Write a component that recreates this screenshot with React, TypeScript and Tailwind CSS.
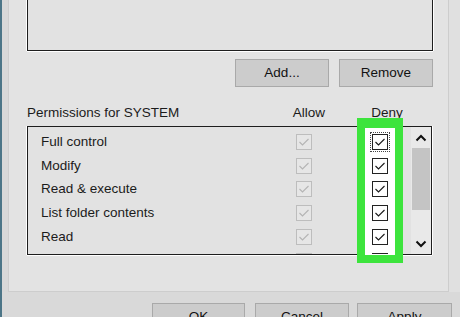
import React from "react";

const rows = ["Full control", "Modify", "Read & execute", "List folder contents", "Read", ""];

function Check({ disabled, focus }: { disabled?: boolean; focus?: boolean }) {
  return (
    <div
      className={
        disabled
          ? "w-[16px] h-[16px] shrink-0 border border-[#bdbdbd] bg-[#e6e6e6] flex items-center justify-center"
          : focus
          ? "relative z-20 w-[16px] h-[16px] shrink-0 border border-[#222] bg-white outline outline-1 outline-dotted outline-offset-[1px] outline-[#444] flex items-center justify-center"
          : "relative z-20 w-[16px] h-[16px] shrink-0 border border-[#222] bg-white flex items-center justify-center"
      }
    >
      <svg width="14" height="14" viewBox="0 0 14 14">
        <path
          d="M2.5 7 L5.5 10 L11.5 4"
          fill="none"
          stroke={disabled ? "#b4b4b4" : "#1a1a1a"}
          strokeWidth="1.1"
        />
      </svg>
    </div>
  );
}

function Btn({ label, w, extra }: { label: string; w: string; extra?: string }) {
  return (
    <div
      className={`${w} h-[28px] shrink-0 bg-[#cccccc] border border-[#a9a9a9] flex items-center justify-center text-[#111] ${extra ?? ""}`}
    >
      {label}
    </div>
  );
}

export default function App() {
  return (
    <div className="relative w-[460px] h-[317px] overflow-hidden flex bg-[#dadada] font-['Liberation_Sans',Arial,sans-serif] text-[13.5px] text-[#1b1b1b]">
      <div className="w-[2px] shrink-0 bg-[#4c7587]" />
      <div className="flex flex-col flex-1">
        <div className="flex h-[292px]">
          <div className="w-[6px] shrink-0 bg-[#d8d8d8]" />
          <div className="w-[441px] shrink-0 h-[292px] bg-[#e3e3e3] border-l border-r border-b border-[#cdcdcd] pl-[18px] flex flex-col">
            <div className="w-[406px] h-[51px] border-x border-b border-[#1e1e1e] bg-[#e2e2e2] shadow-[0_1px_0_#ffffff,1px_0_0_#ffffff,-1px_0_0_#ffffff]" />
            <div className="w-[406px] mt-[8px] flex justify-end gap-[10px]">
              <Btn label="Add..." w="w-[94px]" />
              <Btn label="Remove" w="w-[94px]" />
            </div>
            <div className="mt-[17px] h-[19px] flex items-center">
              <span className="w-[252px]">Permissions for SYSTEM</span>
              <span className="w-[60px] text-center">Allow</span>
              <span className="w-[60px] ml-[18px] text-center">Deny</span>
            </div>
            <div className="mt-[3px] w-[405px] h-[129px] border border-[#1e1e1e] bg-[#e2e2e2] shadow-[0_1px_0_#ffffff,1px_0_0_#ffffff,-1px_0_0_#ffffff] flex overflow-hidden">
              <div className="flex-1 pt-[3px] flex flex-col">
                {rows.map((r, i) => (
                  <div key={i} className="h-[23.75px] shrink-0 flex items-center">
                    <span className="w-[268px] pl-[13px]">{r}</span>
                    <Check disabled />
                    <div className="w-[60px]" />
                    <Check focus={i === 0} />
                  </div>
                ))}
              </div>
              <div className="w-[20px] shrink-0 bg-[#e9e9e9] flex flex-col">
                <div className="h-[21px] flex items-center justify-center">
                  <svg width="12" height="8" viewBox="0 0 12 8">
                    <path d="M1.5 6.5 L6 2 L10.5 6.5" fill="none" stroke="#111" strokeWidth="2" />
                  </svg>
                </div>
                <div className="h-[62px] mx-[1px] bg-[#c4c4c4]" />
                <div className="flex-1" />
                <div className="h-[21px] flex items-center justify-center">
                  <svg width="12" height="8" viewBox="0 0 12 8">
                    <path d="M1.5 1.5 L6 6 L10.5 1.5" fill="none" stroke="#111" strokeWidth="2" />
                  </svg>
                </div>
              </div>
            </div>
          </div>
          <div className="flex-1 bg-[#e0e0e0]" />
        </div>
        <div className="flex-1 flex justify-end pr-[8px] pt-[11px] bg-[#d9d9d9]">
          <Btn label="OK" w="w-[93px]" extra="border-[#15254d] border-[1.5px]" />
          <Btn label="Cancel" w="w-[94px]" extra="ml-[10px]" />
          <Btn label="Apply" w="w-[95px]" extra="ml-[8px]" />
        </div>
      </div>
      <div className="absolute z-10 left-[357px] top-[118px] w-[46px] h-[145px] border-[8px] border-t-[10px] border-[#3de43d] bg-white" />
    </div>
  );
}
